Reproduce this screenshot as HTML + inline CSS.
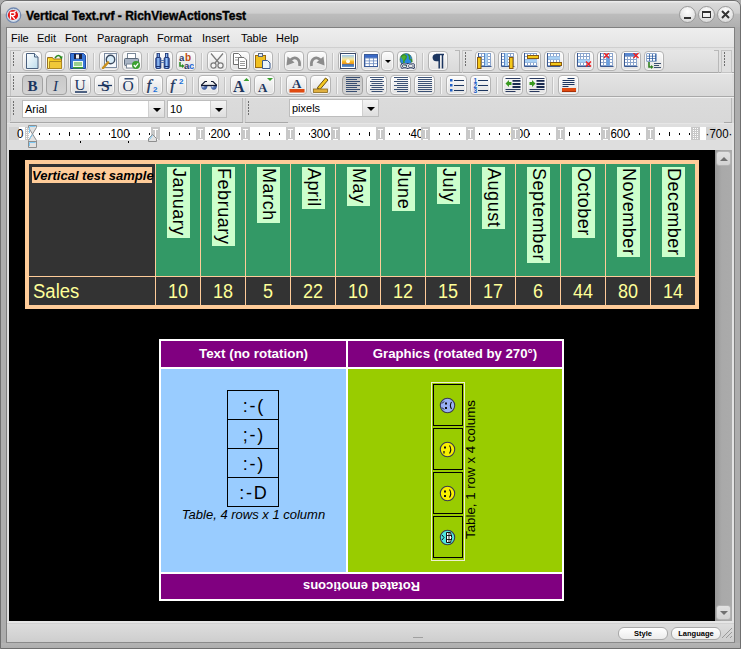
<!DOCTYPE html>
<html><head><meta charset="utf-8">
<style>
*{box-sizing:border-box}
html,body{margin:0;padding:0}
body{width:741px;height:649px;position:relative;overflow:hidden;background:#acacac;font-family:"Liberation Sans",sans-serif}
.a{position:absolute}
.btn{position:absolute;width:20px;height:20px;border:1px solid #b4b4b4;border-radius:4px;background:linear-gradient(#fdfdfd,#ebebeb 60%,#e2e2e2);box-shadow:inset 0 0 0 1px rgba(255,255,255,.6)}
.r2{top:75px;width:21px}
.r1{top:51px}
.on{background:linear-gradient(#c9c9c9,#d3d3d3);border-color:#a2a2a2;box-shadow:none}
.btn svg{position:absolute;left:1px;top:1px}
.r2 svg{left:1.5px}
.sep{position:absolute;width:2px;height:17px;border-left:1px solid #c4c4c4;border-right:1px solid #f4f4f4}
.menu{position:absolute;top:32px;font-size:11px;color:#000}
.grip{position:absolute;width:1px;height:14px;background:repeating-linear-gradient(#6e6e6e 0 1.6px,transparent 1.6px 3px)}
.combo{position:absolute;background:#fff;border:1px solid #bdbdbd;height:18px;font-size:11px;line-height:17px;padding-left:2px}
.dd{position:absolute;top:0;right:0;width:16px;height:16px;background:linear-gradient(#f4f4f4,#dedede);border-left:1px solid #d0d0d0}
.dd:after{content:"";position:absolute;left:4px;top:7px;border-left:4px solid transparent;border-right:4px solid transparent;border-top:4px solid #000}
.mk{position:absolute;top:127px;width:9px;height:13px;background:#c8c8c8}
.mk:before{content:"";position:absolute;left:2px;top:2px;width:5px;height:9px;border-top:1px solid #fff;border-bottom:1px solid #fff}
.mk:after{content:"";position:absolute;left:4px;top:2px;width:1px;height:9px;background:#fff}
.dot{position:absolute;top:133px;width:1px;height:2px;background:#000}
.rn{position:absolute;top:128px;font-size:11.5px;line-height:13px;color:#000;transform:scaleY(1.12)}
/* table1 */
.mcell{position:absolute;top:164px;width:44px;height:112px;background:#339966}
.mlab{position:absolute;left:11px;top:3px;width:23px;background:#ccffcc;writing-mode:vertical-rl;font-size:18px;line-height:23px;white-space:nowrap;color:#000;padding:1px 0 2px;letter-spacing:.55px}
.scell{position:absolute;top:277px;width:44px;height:28px;background:#333;color:#ffff99;font-size:18px;line-height:28px;text-align:center}
.scell span,.sl span{display:inline-block;transform:translateY(0.5px) scaleY(1.08)}
.emo{position:absolute;left:229px;width:48px;height:28px;font-size:18px;line-height:30px;text-align:center;color:#000;letter-spacing:1.8px;text-indent:1.8px}
.ic{position:absolute;left:433px;width:30px;height:42px;border:1px solid #000}
</style></head><body>

<!-- window frame -->
<div class="a" style="left:0;top:0;width:741px;height:649px;border:1px solid #6f6f6f;border-radius:7px 7px 0 0;background:#adadad"></div>
<div class="a" style="left:1px;top:1px;width:739px;height:26px;border-radius:6px 6px 0 0;background:linear-gradient(#ececec 0,#ececec 1px,#dadada 2px,#cecece 12px,#bcbcbc 13.5px,#b0b0b0 26px)"></div>
<div class="a" style="left:6px;top:27px;width:729px;height:616px;background:#808080"></div>
<div class="a" style="left:6px;top:642px;width:729px;height:1px;background:#8a8a8a"></div><div class="a" style="left:1px;top:643px;width:739px;height:5px;background:linear-gradient(#b4b4b4,#aeaeae)"></div>

<!-- app icon -->
<svg class="a" style="left:5px;top:7px" width="17" height="17"><circle cx="8.5" cy="8.2" r="7.2" fill="#f0f4f8" stroke="#7088b0" stroke-width="1.3"/><circle cx="8.5" cy="8.2" r="5.9" fill="none" stroke="#b8c8dc" stroke-width=".8"/><circle cx="8" cy="8" r="5.1" fill="#e41010"/><path d="M5.5 12V5.5h2.5q2 0 2 1.6t-2 1.6h-1.2l3 3.3" fill="none" stroke="#fff" stroke-width="1.3"/><path d="M8.5 5l2.5-.5" stroke="#fff"/></svg>
<!-- title -->
<div class="a" style="left:26px;top:9px;font-size:12px;font-weight:bold;color:#000;line-height:15px;white-space:nowrap;-webkit-text-stroke:.35px #000">Vertical Text.rvf - RichViewActionsTest</div>
<!-- caption buttons -->
<div class="a" style="left:679px;top:6px;width:17px;height:17px;border-radius:50%;border:1px solid #9a9a9a;background:radial-gradient(circle at 50% 30%,#ffffff,#e4e4e4 60%,#cfcfcf)"></div>
<div class="a" style="left:684px;top:17px;width:7px;height:2px;background:#333"></div>
<div class="a" style="left:698px;top:6px;width:17px;height:17px;border-radius:50%;border:1px solid #9a9a9a;background:radial-gradient(circle at 50% 30%,#ffffff,#e4e4e4 60%,#cfcfcf)"></div>
<div class="a" style="left:702px;top:11px;width:9px;height:7px;border:1px solid #333;border-top-width:2px"></div>
<div class="a" style="left:717px;top:6px;width:17px;height:17px;border-radius:50%;border:1px solid #9a9a9a;background:radial-gradient(circle at 50% 30%,#ffffff,#e4e4e4 60%,#cfcfcf)"></div>
<svg class="a" style="left:721px;top:10px" width="9" height="9"><path d="M1 1L8 8M8 1L1 8" stroke="#333" stroke-width="2"/></svg>

<!-- client -->
<div class="a" style="left:7px;top:28px;width:727px;height:614px;background:#dcdcdc"></div>
<!-- menu -->
<div class="a" style="left:7px;top:28px;width:727px;height:19px;background:linear-gradient(#eeeeee,#e4e4e4)"></div>
<div class="a" style="left:7px;top:47px;width:727px;height:1px;background:#cfcfcf"></div>
<div class="menu" style="left:11px">File</div>
<div class="menu" style="left:37px">Edit</div>
<div class="menu" style="left:65px">Font</div>
<div class="menu" style="left:97px">Paragraph</div>
<div class="menu" style="left:157px">Format</div>
<div class="menu" style="left:202px">Insert</div>
<div class="menu" style="left:241px">Table</div>
<div class="menu" style="left:276px">Help</div>

<!-- toolbar rows background -->
<div class="a" style="left:7px;top:48px;width:727px;height:75px;background:linear-gradient(#e2e2e2,#d8d8d8)"></div>
<div class="a" style="left:10px;top:50px;width:709px;height:23px;background:linear-gradient(#e6e6e6,#d9d9d9)"></div>
<div class="a" style="left:7px;top:72px;width:727px;height:1px;background:#a9a9a9"></div>
<div class="a" style="left:7px;top:73px;width:727px;height:1px;background:#f0f0f0"></div>
<div class="a" style="left:10px;top:74px;width:722px;height:23px;background:linear-gradient(#e4e4e4,#d8d8d8)"></div>
<div class="a" style="left:7px;top:96px;width:727px;height:1px;background:#a9a9a9"></div>
<div class="a" style="left:7px;top:97px;width:727px;height:1px;background:#f0f0f0"></div>
<div class="a" style="left:7px;top:123px;width:727px;height:1px;background:#e6e6e6"></div>
<div class="a" style="left:10px;top:50px;width:1px;height:22px;background:#c2c2c2"></div><div class="a" style="left:10px;top:50px;width:11px;height:1px;background:#c2c2c2"></div><div class="a" style="left:10px;top:74px;width:1px;height:22px;background:#c2c2c2"></div><div class="a" style="left:10px;top:98px;width:1px;height:23px;background:#c2c2c2"></div><div class="a" style="left:10px;top:122px;width:233px;height:1px;background:#a8a8a8"></div><div class="a" style="left:245px;top:122px;width:43px;height:1px;background:#a8a8a8"></div><div class="a" style="left:724px;top:122px;width:8px;height:1px;background:#a8a8a8"></div><div class="a" style="left:731px;top:98px;width:1px;height:24px;background:#b8b8b8"></div><div class="grip" style="left:13px;top:52px"></div>
<div class="grip" style="left:13px;top:76px"></div>
<div class="grip" style="left:13px;top:101px"></div>
<div class="grip" style="left:465px;top:52px"></div><div class="a" style="left:462px;top:50px;width:10px;height:1px;background:#c2c2c2"></div>
<div class="grip" style="left:724px;top:52px"></div>
<div class="grip" style="left:248px;top:101px"></div>
<div class="a" style="left:459px;top:50px;width:1px;height:22px;background:#b8b8b8"></div><div class="a" style="left:455px;top:50px;width:4px;height:1px;background:#b8b8b8"></div><div class="a" style="left:714px;top:50px;width:4px;height:1px;background:#b8b8b8"></div>
<div class="a" style="left:462px;top:50px;width:1px;height:23px;background:#c8c8c8"></div>
<div class="a" style="left:718px;top:50px;width:1px;height:23px;background:#b8b8b8"></div>
<div class="a" style="left:721px;top:50px;width:11px;height:23px;border:1px solid #c4c4c4"></div>
<div class="a" style="left:242px;top:98px;width:1px;height:24px;background:#b8b8b8"></div>
<div class="a" style="left:245px;top:98px;width:1px;height:24px;background:#c8c8c8"></div>

<!-- ROW1 -->
<div class="btn r1" style="left:22px"><svg width="16" height="16" viewBox="0 0 16 16"><defs><linearGradient id="gn" x1="0" y1="0" x2="1" y2="1"><stop offset="0" stop-color="#ffffff"/><stop offset="1" stop-color="#bcdcec"/></linearGradient></defs><path d="M2.5 0.5h8l3.5 3.5v11.5h-11.5z" fill="url(#gn)" stroke="#4a607e"/><path d="M10.5 0.5v3.5h3.5" fill="#d8ecf8" stroke="#4a607e"/></svg></div>
<div class="btn r1" style="left:45px"><svg width="16" height="16" viewBox="0 0 16 16"><path d="M0.5 4.5h5l1 1.5h8v9.5h-14z" fill="#f6cc20" stroke="#9a7020"/><path d="M2.5 8.5h12v7h-12z" fill="#f0c838" stroke="#b08a20"/><path d="M1.5 6v9" stroke="#fff070"/><path d="M8 5q3.5-5 6.5 0" fill="none" stroke="#2a8a20" stroke-width="1.6"/><path d="M12.5 4.5l3 -1.5-0.5 3.5z" fill="#2a8a20"/></svg></div>
<div class="btn r1" style="left:68px"><svg width="16" height="16" viewBox="0 0 16 16"><path d="M0.5 0.5h13l2 2v13h-15z" fill="#3a78d8" stroke="#2048a0"/><rect x="4" y="1" width="8" height="5" fill="#1a2040"/><rect x="6" y="1.5" width="3" height="4" fill="#f0f0f0"/><rect x="3" y="8" width="10" height="7" fill="#f4fff0"/><path d="M4 10h8M4 12h8" stroke="#40a030" stroke-width="1.2"/><rect x="3" y="14" width="10" height="1.5" fill="#40a030"/></svg></div>
<div class="sep" style="left:93px;top:53px"></div>
<div class="btn r1" style="left:99px"><svg width="16" height="16" viewBox="0 0 16 16"><rect x="3.5" y="0.5" width="12" height="14" fill="#f4f8fc" stroke="#7a8aa0"/><circle cx="9.5" cy="6.5" r="4.2" fill="#d8ecf8" stroke="#3a4a60" stroke-width="1.4"/><path d="M7 9.5l-5 5.5" stroke="#c89020" stroke-width="2.6" stroke-linecap="round"/></svg></div>
<div class="btn r1" style="left:122px"><svg width="16" height="16" viewBox="0 0 16 16"><rect x="3.5" y="0.5" width="8" height="5" fill="#fff" stroke="#7a8898"/><rect x="0.5" y="5.5" width="14" height="7" rx="1" fill="#a8b4c4" stroke="#5a6878"/><rect x="2.5" y="11" width="9" height="4" fill="#fff" stroke="#7a8898"/><circle cx="12" cy="12" r="4" fill="#3aa030"/><path d="M9.8 12l1.6 1.8 2.8-3.4" stroke="#fff" stroke-width="1.3" fill="none"/></svg></div>
<div class="sep" style="left:147px;top:53px"></div>
<div class="btn r1" style="left:153px"><svg width="16" height="16" viewBox="0 0 16 16"><defs><linearGradient id="gb" x1="0" x2="1"><stop offset="0" stop-color="#1a3a90"/><stop offset=".45" stop-color="#9ccaff"/><stop offset="1" stop-color="#1a3a90"/></linearGradient></defs><rect x="2" y="0.5" width="2.5" height="4" fill="url(#gb)" stroke="#183070" stroke-width=".8"/><rect x="10.5" y="0.5" width="2.5" height="4" fill="url(#gb)" stroke="#183070" stroke-width=".8"/><rect x="0.8" y="4.5" width="5" height="11" rx="1" fill="url(#gb)" stroke="#183070" stroke-width=".9"/><rect x="9.2" y="4.5" width="5" height="11" rx="1" fill="url(#gb)" stroke="#183070" stroke-width=".9"/><path d="M5.8 7.5h3.4M5.8 9.5h3.4" stroke="#5a7ab0"/><path d="M1 13.5h4.6M9.4 13.5h4.6" stroke="#183070" stroke-width="1.2"/></svg></div>
<div class="btn r1" style="left:176px"><svg width="16" height="16" viewBox="0 0 16 16"><text x="1" y="8" font-size="9.5" font-weight="bold" font-family="Liberation Sans" fill="#2a3a6a">a</text><text x="7" y="8" font-size="10" font-weight="bold" font-family="Liberation Sans" fill="#c04a10">b</text><text x="6" y="15.5" font-size="9.5" font-weight="bold" font-family="Liberation Sans" fill="#2a3a6a">a</text><text x="11" y="15.5" font-size="9.5" font-weight="bold" font-family="Liberation Sans" fill="#2a68d8">c</text><path d="M2 9v4h3" stroke="#2a8a20" stroke-width="1.5" fill="none"/><path d="M4 11l2.5 2-2.5 2z" fill="#2a8a20"/></svg></div>
<div class="sep" style="left:201px;top:53px"></div>
<div class="btn r1" style="left:207px"><svg width="16" height="16" viewBox="0 0 16 16"><path d="M2 0.5l8 9.5M14 0.5l-8 9.5" stroke="#7a7a7a" stroke-width="1.2"/><circle cx="4.5" cy="12.5" r="2.6" fill="#f4f4f4" stroke="#7a7a7a" stroke-width="1.2"/><circle cx="11.5" cy="12.5" r="2.6" fill="#f4f4f4" stroke="#7a7a7a" stroke-width="1.2"/></svg></div>
<div class="btn r1" style="left:230px"><svg width="16" height="16" viewBox="0 0 16 16"><path d="M1.5 0.5h5l2.5 2.5v8.5h-7.5z" fill="#fff" stroke="#707070"/><path d="M3 4.5h4M3 7h4" stroke="#9a9a9a"/><path d="M6.5 4.5h5.5l2.5 2.5v8.5h-8z" fill="#fff" stroke="#707070"/><path d="M8 8.5h5M8 10.5h5M8 12.5h5" stroke="#9a9a9a"/></svg></div>
<div class="btn r1" style="left:253px"><svg width="16" height="16" viewBox="0 0 16 16"><rect x="0.5" y="2.5" width="10" height="12" fill="#f0c020" stroke="#9a6a10"/><rect x="3.5" y="0.5" width="4" height="3" fill="#e0e8f0" stroke="#5a6a80"/><path d="M7.5 7.5h5l2.5 2.5v5.5h-7.5z" fill="#eaf4fc" stroke="#3a5a90"/></svg></div>
<div class="sep" style="left:278px;top:53px"></div>
<div class="btn r1" style="left:284px"><svg width="16" height="16" viewBox="0 0 16 16"><path d="M13.5 13C14.5 6 9 2.5 4.5 7" fill="none" stroke="#8c8c8c" stroke-width="2.8"/><path d="M0.5 12.5L1.5 3.5L8.5 9.5Z" fill="#8c8c8c"/></svg></div>
<div class="btn r1" style="left:307px"><svg width="16" height="16" viewBox="0 0 16 16"><g transform="matrix(-1 0 0 1 16 0)"><path d="M13.5 13C14.5 6 9 2.5 4.5 7" fill="none" stroke="#8c8c8c" stroke-width="2.8"/><path d="M0.5 12.5L1.5 3.5L8.5 9.5Z" fill="#8c8c8c"/></g></svg></div>
<div class="sep" style="left:332px;top:53px"></div>
<div class="btn r1" style="left:338px"><svg width="16" height="16" viewBox="0 0 16 16"><defs><linearGradient id="gi" x1="0" y1="0" x2="0" y2="1"><stop offset="0" stop-color="#9cc8f0"/><stop offset=".35" stop-color="#f8e8a0"/><stop offset=".55" stop-color="#f8b820"/><stop offset=".75" stop-color="#e89020"/><stop offset=".8" stop-color="#3a6ab0"/><stop offset="1" stop-color="#6a9ad0"/></linearGradient></defs><rect x="0.5" y="0.5" width="15" height="15" fill="#fff" stroke="#3a4a6a"/><rect x="2" y="2" width="12" height="12" fill="url(#gi)"/><circle cx="8" cy="8.2" r="2" fill="#fffef0"/></svg></div>
<div class="btn r1" style="left:361px;width:19px"><svg width="16" height="16" viewBox="0 0 16 16"><rect x="1.5" y="1.5" width="13" height="12" fill="#6a8ac0"/><rect x="1.5" y="1.5" width="13" height="3" fill="#3a6ac8"/><rect x="2.5" y="5.5" width="3.4" height="2" fill="#fff"/><rect x="2.5" y="8.3" width="3.4" height="2" fill="#fff"/><rect x="2.5" y="11.1" width="3.4" height="2" fill="#fff"/><rect x="6.7" y="5.5" width="3.4" height="2" fill="#fff"/><rect x="6.7" y="8.3" width="3.4" height="2" fill="#fff"/><rect x="6.7" y="11.1" width="3.4" height="2" fill="#fff"/><rect x="10.9" y="5.5" width="3.4" height="2" fill="#fff"/><rect x="10.9" y="8.3" width="3.4" height="2" fill="#fff"/><rect x="10.9" y="11.1" width="3.4" height="2" fill="#fff"/><rect x="1.5" y="1.5" width="13" height="12" fill="none" stroke="#3a5a98"/></svg></div>
<div class="btn r1" style="left:381px;width:13px"><div class="a" style="left:3px;top:8px;border-left:3px solid transparent;border-right:3px solid transparent;border-top:3px solid #000;width:0;height:0"></div></div>
<div class="btn r1" style="left:397px"><svg width="16" height="16" viewBox="0 0 16 16"><circle cx="7" cy="6.5" r="6" fill="#2a88e0"/><path d="M2 4q2-3 4-2t1 3-2 3 1 3M9 1.5q2 1 1.5 3t2 2.5l0.5 2" fill="#50b030" stroke="#3a9a20" stroke-width="1.3"/><circle cx="7" cy="6.5" r="6" fill="none" stroke="#2a6a40" stroke-width=".6"/><rect x="2.5" y="11" width="6.5" height="4.2" rx="2.1" fill="none" stroke="#1a2a50" stroke-width="2.2"/><rect x="8.5" y="11" width="6.5" height="4.2" rx="2.1" fill="none" stroke="#1a2a50" stroke-width="2.2"/><rect x="2.5" y="11" width="6.5" height="4.2" rx="2.1" fill="none" stroke="#fff" stroke-width=".9"/><rect x="8.5" y="11" width="6.5" height="4.2" rx="2.1" fill="none" stroke="#fff" stroke-width=".9"/></svg></div>
<div class="sep" style="left:422px;top:53px"></div>
<div class="btn r1" style="left:428px"><svg width="16" height="16" viewBox="0 0 16 16"><path d="M6 1.5h8M9.2 1.5v14M12.5 1.5v14" stroke="#1c3660" stroke-width="1.5"/><path d="M9.5 1h-3.3a3.6 3.6 0 0 0 0 7.2h3.3z" fill="#1c3660"/></svg></div>
<div class="btn r1" style="left:475px"><svg width="16" height="16" viewBox="0 0 16 16"><rect x="1" y="0" width="13" height="13" fill="#8aa4cc"/><rect x="2" y="1" width="2" height="2" fill="#fff"/><rect x="2" y="4" width="2" height="2" fill="#fff"/><rect x="2" y="7" width="2" height="2" fill="#fff"/><rect x="2" y="10" width="2" height="2" fill="#fff"/><rect x="5" y="1" width="2" height="2" fill="#fff"/><rect x="5" y="4" width="2" height="2" fill="#fff"/><rect x="5" y="7" width="2" height="2" fill="#fff"/><rect x="5" y="10" width="2" height="2" fill="#fff"/><rect x="8" y="1" width="2" height="2" fill="#fff"/><rect x="8" y="4" width="2" height="2" fill="#fff"/><rect x="8" y="7" width="2" height="2" fill="#fff"/><rect x="8" y="10" width="2" height="2" fill="#fff"/><rect x="11" y="1" width="2" height="2" fill="#fff"/><rect x="11" y="4" width="2" height="2" fill="#fff"/><rect x="11" y="7" width="2" height="2" fill="#fff"/><rect x="11" y="10" width="2" height="2" fill="#fff"/><rect x="7.5" y="0" width="3" height="13" fill="#a8d0f4"/><path d="M7.5 0v13" stroke="#5a88c8"/><path d="M1.5 0v13.5h13" fill="none" stroke="#3a5890"/><rect x="0.5" y="4.5" width="3.5" height="11" fill="#f4c818" stroke="#8a5a10"/></svg></div>
<div class="btn r1" style="left:498px"><svg width="16" height="16" viewBox="0 0 16 16"><rect x="1" y="0" width="13" height="13" fill="#8aa4cc"/><rect x="2" y="1" width="2" height="2" fill="#fff"/><rect x="2" y="4" width="2" height="2" fill="#fff"/><rect x="2" y="7" width="2" height="2" fill="#fff"/><rect x="2" y="10" width="2" height="2" fill="#fff"/><rect x="5" y="1" width="2" height="2" fill="#fff"/><rect x="5" y="4" width="2" height="2" fill="#fff"/><rect x="5" y="7" width="2" height="2" fill="#fff"/><rect x="5" y="10" width="2" height="2" fill="#fff"/><rect x="8" y="1" width="2" height="2" fill="#fff"/><rect x="8" y="4" width="2" height="2" fill="#fff"/><rect x="8" y="7" width="2" height="2" fill="#fff"/><rect x="8" y="10" width="2" height="2" fill="#fff"/><rect x="11" y="1" width="2" height="2" fill="#fff"/><rect x="11" y="4" width="2" height="2" fill="#fff"/><rect x="11" y="7" width="2" height="2" fill="#fff"/><rect x="11" y="10" width="2" height="2" fill="#fff"/><rect x="4.5" y="0" width="3" height="13" fill="#a8d0f4"/><path d="M4.5 0v13" stroke="#5a88c8"/><path d="M1.5 0v13.5h13" fill="none" stroke="#3a5890"/><rect x="9.5" y="4.5" width="3.5" height="11" fill="#f4c818" stroke="#8a5a10"/></svg></div>
<div class="btn r1" style="left:521px"><svg width="16" height="16" viewBox="0 0 16 16"><rect x="1" y="0" width="13" height="13" fill="#8aa4cc"/><rect x="2" y="1" width="2" height="2" fill="#fff"/><rect x="2" y="4" width="2" height="2" fill="#fff"/><rect x="2" y="7" width="2" height="2" fill="#fff"/><rect x="2" y="10" width="2" height="2" fill="#fff"/><rect x="5" y="1" width="2" height="2" fill="#fff"/><rect x="5" y="4" width="2" height="2" fill="#fff"/><rect x="5" y="7" width="2" height="2" fill="#fff"/><rect x="5" y="10" width="2" height="2" fill="#fff"/><rect x="8" y="1" width="2" height="2" fill="#fff"/><rect x="8" y="4" width="2" height="2" fill="#fff"/><rect x="8" y="7" width="2" height="2" fill="#fff"/><rect x="8" y="10" width="2" height="2" fill="#fff"/><rect x="11" y="1" width="2" height="2" fill="#fff"/><rect x="11" y="4" width="2" height="2" fill="#fff"/><rect x="11" y="7" width="2" height="2" fill="#fff"/><rect x="11" y="10" width="2" height="2" fill="#fff"/><rect x="1" y="6.5" width="13" height="3" fill="#a8d0f4"/><path d="M1.5 0v13.5h13" fill="none" stroke="#3a5890"/><rect x="4.5" y="2.5" width="11" height="3" fill="#f4c818" stroke="#8a5a10"/></svg></div>
<div class="btn r1" style="left:544px"><svg width="16" height="16" viewBox="0 0 16 16"><rect x="1" y="0" width="13" height="13" fill="#8aa4cc"/><rect x="2" y="1" width="2" height="2" fill="#fff"/><rect x="2" y="4" width="2" height="2" fill="#fff"/><rect x="2" y="7" width="2" height="2" fill="#fff"/><rect x="2" y="10" width="2" height="2" fill="#fff"/><rect x="5" y="1" width="2" height="2" fill="#fff"/><rect x="5" y="4" width="2" height="2" fill="#fff"/><rect x="5" y="7" width="2" height="2" fill="#fff"/><rect x="5" y="10" width="2" height="2" fill="#fff"/><rect x="8" y="1" width="2" height="2" fill="#fff"/><rect x="8" y="4" width="2" height="2" fill="#fff"/><rect x="8" y="7" width="2" height="2" fill="#fff"/><rect x="8" y="10" width="2" height="2" fill="#fff"/><rect x="11" y="1" width="2" height="2" fill="#fff"/><rect x="11" y="4" width="2" height="2" fill="#fff"/><rect x="11" y="7" width="2" height="2" fill="#fff"/><rect x="11" y="10" width="2" height="2" fill="#fff"/><rect x="1" y="3.5" width="13" height="3" fill="#a8d0f4"/><path d="M1.5 0v13.5h13" fill="none" stroke="#3a5890"/><rect x="4.5" y="9.5" width="11" height="3" fill="#f4c818" stroke="#8a5a10"/></svg></div>
<div class="sep" style="left:568px;top:53px"></div>
<div class="btn r1" style="left:574px"><svg width="16" height="16" viewBox="0 0 16 16"><rect x="1" y="0" width="13" height="13" fill="#8aa4cc"/><rect x="2" y="1" width="2" height="2" fill="#fff"/><rect x="2" y="4" width="2" height="2" fill="#fff"/><rect x="2" y="7" width="2" height="2" fill="#fff"/><rect x="2" y="10" width="2" height="2" fill="#fff"/><rect x="5" y="1" width="2" height="2" fill="#fff"/><rect x="5" y="4" width="2" height="2" fill="#fff"/><rect x="5" y="7" width="2" height="2" fill="#fff"/><rect x="5" y="10" width="2" height="2" fill="#fff"/><rect x="8" y="1" width="2" height="2" fill="#fff"/><rect x="8" y="4" width="2" height="2" fill="#fff"/><rect x="8" y="7" width="2" height="2" fill="#fff"/><rect x="8" y="10" width="2" height="2" fill="#fff"/><rect x="11" y="1" width="2" height="2" fill="#fff"/><rect x="11" y="4" width="2" height="2" fill="#fff"/><rect x="11" y="7" width="2" height="2" fill="#fff"/><rect x="11" y="10" width="2" height="2" fill="#fff"/><rect x="1" y="6.5" width="13" height="3" fill="#a8d4f8"/><path d="M1.5 0v13.5h13" fill="none" stroke="#3a5890"/><path d="M10 8.5l5 5M15 8.5l-5 5" stroke="#f02020" stroke-width="1.4"/></svg></div>
<div class="btn r1" style="left:597px"><svg width="16" height="16" viewBox="0 0 16 16"><rect x="1" y="0" width="13" height="13" fill="#8aa4cc"/><rect x="2" y="1" width="2" height="2" fill="#fff"/><rect x="2" y="4" width="2" height="2" fill="#fff"/><rect x="2" y="7" width="2" height="2" fill="#fff"/><rect x="2" y="10" width="2" height="2" fill="#fff"/><rect x="5" y="1" width="2" height="2" fill="#fff"/><rect x="5" y="4" width="2" height="2" fill="#fff"/><rect x="5" y="7" width="2" height="2" fill="#fff"/><rect x="5" y="10" width="2" height="2" fill="#fff"/><rect x="8" y="1" width="2" height="2" fill="#fff"/><rect x="8" y="4" width="2" height="2" fill="#fff"/><rect x="8" y="7" width="2" height="2" fill="#fff"/><rect x="8" y="10" width="2" height="2" fill="#fff"/><rect x="11" y="1" width="2" height="2" fill="#fff"/><rect x="11" y="4" width="2" height="2" fill="#fff"/><rect x="11" y="7" width="2" height="2" fill="#fff"/><rect x="11" y="10" width="2" height="2" fill="#fff"/><rect x="7.5" y="3" width="3" height="10.5" fill="#6aa0e0"/><path d="M1.5 0v13.5h13" fill="none" stroke="#3a5890"/><path d="M5 0l5 5M10 0l-5 5" stroke="#f02020" stroke-width="1.4"/></svg></div>
<div class="btn r1" style="left:621px"><svg width="16" height="16" viewBox="0 0 16 16"><rect x="1" y="0" width="13" height="13" fill="#8aa4cc"/><rect x="2" y="1" width="2" height="2" fill="#fff"/><rect x="2" y="4" width="2" height="2" fill="#fff"/><rect x="2" y="7" width="2" height="2" fill="#fff"/><rect x="2" y="10" width="2" height="2" fill="#fff"/><rect x="5" y="1" width="2" height="2" fill="#fff"/><rect x="5" y="4" width="2" height="2" fill="#fff"/><rect x="5" y="7" width="2" height="2" fill="#fff"/><rect x="5" y="10" width="2" height="2" fill="#fff"/><rect x="8" y="1" width="2" height="2" fill="#fff"/><rect x="8" y="4" width="2" height="2" fill="#fff"/><rect x="8" y="7" width="2" height="2" fill="#fff"/><rect x="8" y="10" width="2" height="2" fill="#fff"/><rect x="11" y="1" width="2" height="2" fill="#fff"/><rect x="11" y="4" width="2" height="2" fill="#fff"/><rect x="11" y="7" width="2" height="2" fill="#fff"/><rect x="11" y="10" width="2" height="2" fill="#fff"/><rect x="1" y="0" width="13" height="3" fill="#5a88d0"/><path d="M1.5 0v13.5h13" fill="none" stroke="#3a5890"/><path d="M10.5 0l5 5M15.5 0l-5 5" stroke="#f02020" stroke-width="1.4"/></svg></div>
<div class="btn r1" style="left:644px"><svg width="16" height="16" viewBox="0 0 16 16"><rect x="0.5" y="0.5" width="10" height="8" fill="#2a5aa0"/><rect x="1" y="1.0" width="2.2" height="1.8" fill="#fff"/><rect x="1" y="3.5" width="2.2" height="1.8" fill="#fff"/><rect x="1" y="6.0" width="2.2" height="1.8" fill="#fff"/><rect x="4" y="1.0" width="2.2" height="1.8" fill="#fff"/><rect x="4" y="3.5" width="2.2" height="1.8" fill="#fff"/><rect x="4" y="6.0" width="2.2" height="1.8" fill="#fff"/><rect x="7" y="1.0" width="2.2" height="1.8" fill="#fff"/><rect x="7" y="3.5" width="2.2" height="1.8" fill="#fff"/><rect x="7" y="6.0" width="2.2" height="1.8" fill="#fff"/><path d="M3 9v5h3" fill="none" stroke="#308020" stroke-width="1.6"/><path d="M5 12l2.5 2-2.5 2z" fill="#308020"/><path d="M8 10.5h7M8 12.5h5M8 14.5h7" stroke="#3a5070"/></svg></div>
<!-- ROW2 -->
<div class="btn r2 on" style="left:22px"><svg width="16" height="16" viewBox="0 0 16 16"><text x="2.5" y="13.5" font-size="15" font-family="Liberation Serif" font-weight="bold" font-style="normal" fill="#1c3660">B</text></svg></div>
<div class="btn r2 on" style="left:46px"><svg width="16" height="16" viewBox="0 0 16 16"><text x="4" y="13.5" font-size="15" font-family="Liberation Serif" font-weight="normal" font-style="italic" fill="#1c3660">I</text></svg></div>
<div class="btn r2" style="left:70px"><svg width="16" height="16" viewBox="0 0 16 16"><text x="1.5" y="12.5" font-size="15.5" font-family="Liberation Serif" font-weight="normal" font-style="normal" fill="#1c3660">U</text><path d="M2 15h12" stroke="#1c3660" stroke-width="1.5"/></svg></div>
<div class="btn r2" style="left:94px"><svg width="16" height="16" viewBox="0 0 16 16"><text x="4" y="13.5" font-size="15.5" font-family="Liberation Serif" font-weight="bold" font-style="normal" fill="#1c3660">S</text><path d="M1 8.5h14" stroke="#1c3660" stroke-width="1.3"/></svg></div>
<div class="btn r2" style="left:118px"><svg width="16" height="16" viewBox="0 0 16 16"><text x="1.5" y="14" font-size="15.5" font-family="Liberation Serif" font-weight="normal" font-style="normal" fill="#1c3660">O</text><path d="M3.5 1.8h9" stroke="#1c3660" stroke-width="1.3"/></svg></div>
<div class="btn r2" style="left:142px"><svg width="16" height="16" viewBox="0 0 16 16"><text x="1.5" y="13.5" font-size="17" font-family="Liberation Serif" font-style="italic" fill="#1c3660" stroke="#1c3660" stroke-width=".3">f</text><text x="8" y="15" font-size="8" font-family="Liberation Sans" font-weight="bold" fill="#1a70d8">2</text></svg></div>
<div class="btn r2" style="left:166px"><svg width="16" height="16" viewBox="0 0 16 16"><text x="1" y="14" font-size="17" font-family="Liberation Serif" font-style="italic" fill="#1c3660" stroke="#1c3660" stroke-width=".3">f</text><text x="10" y="6.5" font-size="8" font-family="Liberation Sans" font-weight="bold" fill="#1a70d8">2</text></svg></div>
<div class="sep" style="left:192px;top:77px"></div>
<div class="btn r2" style="left:198px"><svg width="16" height="16" viewBox="0 0 16 16"><defs><radialGradient id="gg" cx=".3" cy=".3" r=".8"><stop offset="0" stop-color="#e8f0ff"/><stop offset=".35" stop-color="#5a78b8"/><stop offset="1" stop-color="#2a4a90"/></radialGradient></defs><path d="M0 8.5L4 4.5h2M16 8.5L12 4.5h-2" fill="none" stroke="#101830" stroke-width="1.2"/><path d="M0 8h6.5q0 4.8-3.2 4.8t-3.3-4.8z" fill="url(#gg)"/><path d="M9.5 8h6.5q0 4.8-3.2 4.8t-3.3-4.8z" fill="url(#gg)"/><path d="M0 8.5h16" stroke="#101830" stroke-width="1.3"/></svg></div>
<div class="sep" style="left:224px;top:77px"></div>
<div class="btn r2" style="left:230px"><svg width="16" height="16" viewBox="0 0 16 16"><text x="0" y="14.5" font-size="16" font-family="Liberation Serif" font-weight="bold" fill="#1c3660">A</text><path d="M10.5 4l3-3 3 3z" fill="#3aa030"/></svg></div>
<div class="btn r2" style="left:254px"><svg width="16" height="16" viewBox="0 0 16 16"><text x="1" y="14.5" font-size="13" font-family="Liberation Serif" font-weight="bold" fill="#1c3660">A</text><path d="M10 1h6l-3 3z" fill="#3aa030"/></svg></div>
<div class="sep" style="left:280px;top:77px"></div>
<div class="btn r2" style="left:286px"><svg width="16" height="16" viewBox="0 0 16 16"><text x="3" y="11" font-size="13" font-family="Liberation Serif" font-weight="bold" fill="#1c3660">A</text><rect x="0.5" y="12" width="15" height="3.5" fill="#e04a10"/></svg></div>
<div class="btn r2" style="left:310px"><svg width="16" height="16" viewBox="0 0 16 16"><path d="M4.5 10.5l8-9.5 2.5 2-8 9.5z" fill="#f4c820" stroke="#6a5010"/><path d="M4.5 10.5l-1 2 2.5-0.5" fill="#6a5010"/><rect x="0.5" y="12" width="14" height="3.5" fill="#e0b040" stroke="#8a6a20" stroke-width=".8"/></svg></div>
<div class="sep" style="left:336px;top:77px"></div>
<div class="btn r2 on" style="left:342px"><svg width="16" height="16" viewBox="0 0 16 16"><path d="M1 0.5h14" stroke="#1c3660" stroke-opacity=".85"/><path d="M1 2.5h11" stroke="#1c3660" stroke-opacity=".85"/><path d="M1 4.5h14" stroke="#1c3660" stroke-opacity=".85"/><path d="M1 6.5h11" stroke="#1c3660" stroke-opacity=".85"/><path d="M1 8.5h14" stroke="#1c3660" stroke-opacity=".85"/><path d="M1 10.5h11" stroke="#1c3660" stroke-opacity=".85"/><path d="M1 12.5h14" stroke="#1c3660" stroke-opacity=".85"/><path d="M1 14.5h11" stroke="#1c3660" stroke-opacity=".85"/></svg></div>
<div class="btn r2" style="left:366px"><svg width="16" height="16" viewBox="0 0 16 16"><path d="M1 0.5h14" stroke="#1c3660" stroke-opacity=".85"/><path d="M2.5 2.5h11" stroke="#1c3660" stroke-opacity=".85"/><path d="M1 4.5h14" stroke="#1c3660" stroke-opacity=".85"/><path d="M2.5 6.5h11" stroke="#1c3660" stroke-opacity=".85"/><path d="M1 8.5h14" stroke="#1c3660" stroke-opacity=".85"/><path d="M2.5 10.5h11" stroke="#1c3660" stroke-opacity=".85"/><path d="M1 12.5h14" stroke="#1c3660" stroke-opacity=".85"/><path d="M2.5 14.5h11" stroke="#1c3660" stroke-opacity=".85"/></svg></div>
<div class="btn r2" style="left:390px"><svg width="16" height="16" viewBox="0 0 16 16"><path d="M1 0.5h14" stroke="#1c3660" stroke-opacity=".85"/><path d="M4 2.5h11" stroke="#1c3660" stroke-opacity=".85"/><path d="M1 4.5h14" stroke="#1c3660" stroke-opacity=".85"/><path d="M4 6.5h11" stroke="#1c3660" stroke-opacity=".85"/><path d="M1 8.5h14" stroke="#1c3660" stroke-opacity=".85"/><path d="M4 10.5h11" stroke="#1c3660" stroke-opacity=".85"/><path d="M1 12.5h14" stroke="#1c3660" stroke-opacity=".85"/><path d="M4 14.5h11" stroke="#1c3660" stroke-opacity=".85"/></svg></div>
<div class="btn r2" style="left:414px"><svg width="16" height="16" viewBox="0 0 16 16"><path d="M1 0.5h14" stroke="#1c3660" stroke-opacity=".85"/><path d="M1 2.5h14" stroke="#1c3660" stroke-opacity=".85"/><path d="M1 4.5h14" stroke="#1c3660" stroke-opacity=".85"/><path d="M1 6.5h14" stroke="#1c3660" stroke-opacity=".85"/><path d="M1 8.5h14" stroke="#1c3660" stroke-opacity=".85"/><path d="M1 10.5h14" stroke="#1c3660" stroke-opacity=".85"/><path d="M1 12.5h14" stroke="#1c3660" stroke-opacity=".85"/><path d="M1 14.5h14" stroke="#1c3660" stroke-opacity=".85"/></svg></div>
<div class="sep" style="left:440px;top:77px"></div>
<div class="btn r2" style="left:446px"><svg width="16" height="16" viewBox="0 0 16 16"><rect x="1" y="2" width="2.5" height="2.5" fill="#2060c8"/><rect x="1" y="7" width="2.5" height="2.5" fill="#2060c8"/><rect x="1" y="12" width="2.5" height="2.5" fill="#2060c8"/><path d="M5 3.5h10M5 8.5h10M5 13.5h10" stroke="#1c3660" stroke-width="1.1"/></svg></div>
<div class="btn r2" style="left:470px"><svg width="16" height="16" viewBox="0 0 16 16"><text x="0.5" y="6" font-size="6.5" font-family="Liberation Sans" font-weight="bold" fill="#2060c8">1</text><text x="0.5" y="11" font-size="6.5" font-family="Liberation Sans" font-weight="bold" fill="#2060c8">2</text><text x="0.5" y="16" font-size="6.5" font-family="Liberation Sans" font-weight="bold" fill="#2060c8">3</text><path d="M5 3.5h10M5 8.5h10M5 13.5h10" stroke="#1c3660" stroke-width="1.1"/></svg></div>
<div class="sep" style="left:496px;top:77px"></div>
<div class="btn r2" style="left:502px"><svg width="16" height="16" viewBox="0 0 16 16"><path d="M0.5 1.5h15M0.5 12.5h15M0.5 14.5h10" stroke="#2a3a60" stroke-width="1"/><path d="M7.5 3.8h8M7.5 7h8M7.5 10h8" stroke="#1a2a50" stroke-width="1.8"/><path d="M0.5 6.5l3.5-3.5v2h2.5v3h-2.5v2z" fill="#3a9a20"/></svg></div>
<div class="btn r2" style="left:526px"><svg width="16" height="16" viewBox="0 0 16 16"><path d="M0.5 1.5h15M0.5 12.5h15M0.5 14.5h10" stroke="#2a3a60" stroke-width="1"/><path d="M7.5 3.8h8M7.5 7h8M7.5 10h8" stroke="#1a2a50" stroke-width="1.8"/><path d="M6.5 6.5l-3.5-3.5v2h-2.5v3h2.5v2z" fill="#3a9a20"/></svg></div>
<div class="sep" style="left:552px;top:77px"></div>
<div class="btn r2" style="left:558px"><svg width="16" height="16" viewBox="0 0 16 16"><path d="M6.5 1.5h7M1.5 3.5h12M1.5 5.5h12M1.5 7.5h12M1.5 9.5h6" stroke="#1c3660"/><rect x="1" y="11" width="14" height="4" fill="#e04a10"/><path d="M1 14.5h14" stroke="#a83008"/></svg></div>

<!-- font bar -->
<div class="combo" style="left:22px;top:100px;width:143px">Arial<div class="dd"></div></div>
<div class="combo" style="left:167px;top:100px;width:60px">10<div class="dd"></div></div>
<div class="combo" style="left:289px;top:99px;width:90px">pixels<div class="dd"></div></div>

<!-- ruler -->
<div class="a" style="left:7px;top:124px;width:727px;height:26px;background:#dedede"></div>
<div class="a" style="left:9px;top:127px;width:697px;height:13px;background:#fff"></div>
<div class="a" style="left:9px;top:127px;width:10px;height:13px;background:#d2d2d2"></div><svg class="a" style="left:25px;top:127px" width="4" height="13"><rect width="4" height="13" fill="#c8c8c8"/><rect x="1" y="1" width="1" height="1" fill="#fff"/><rect x="1" y="3" width="1" height="1" fill="#fff"/><rect x="1" y="5" width="1" height="1" fill="#fff"/><rect x="1" y="7" width="1" height="1" fill="#fff"/><rect x="1" y="9" width="1" height="1" fill="#fff"/><rect x="1" y="11" width="1" height="1" fill="#fff"/><rect x="3" y="1" width="1" height="1" fill="#fff"/><rect x="3" y="3" width="1" height="1" fill="#fff"/><rect x="3" y="5" width="1" height="1" fill="#fff"/><rect x="3" y="7" width="1" height="1" fill="#fff"/><rect x="3" y="9" width="1" height="1" fill="#fff"/><rect x="3" y="11" width="1" height="1" fill="#fff"/></svg>
<div class="a" style="left:706px;top:127px;width:10px;height:13px;background:#d2d2d2"></div>
<div class="rn" style="left:17px">0</div>
<div class="dot" style="left:39px"></div>
<div class="dot" style="left:49px"></div>
<div class="dot" style="left:59px"></div>
<div class="dot" style="left:69px;top:132px;height:4px"></div>
<div class="dot" style="left:79px"></div>
<div class="dot" style="left:89px"></div>
<div class="dot" style="left:99px"></div>
<div class="dot" style="left:109px"></div>
<div class="rn" style="left:70px;width:100px;text-align:center">100</div>
<div class="dot" style="left:129px"></div>
<div class="dot" style="left:139px"></div>
<div class="dot" style="left:149px"></div>
<div class="dot" style="left:159px"></div>
<div class="dot" style="left:169px;top:132px;height:4px"></div>
<div class="dot" style="left:179px"></div>
<div class="dot" style="left:189px"></div>
<div class="dot" style="left:199px"></div>
<div class="dot" style="left:209px"></div>
<div class="rn" style="left:170px;width:100px;text-align:center">200</div>
<div class="dot" style="left:229px"></div>
<div class="dot" style="left:239px"></div>
<div class="dot" style="left:249px"></div>
<div class="dot" style="left:259px"></div>
<div class="dot" style="left:269px;top:132px;height:4px"></div>
<div class="dot" style="left:279px"></div>
<div class="dot" style="left:289px"></div>
<div class="dot" style="left:299px"></div>
<div class="dot" style="left:309px"></div>
<div class="rn" style="left:270px;width:100px;text-align:center">300</div>
<div class="dot" style="left:329px"></div>
<div class="dot" style="left:339px"></div>
<div class="dot" style="left:349px"></div>
<div class="dot" style="left:359px"></div>
<div class="dot" style="left:369px;top:132px;height:4px"></div>
<div class="dot" style="left:379px"></div>
<div class="dot" style="left:389px"></div>
<div class="dot" style="left:399px"></div>
<div class="dot" style="left:409px"></div>
<div class="rn" style="left:370px;width:100px;text-align:center">400</div>
<div class="dot" style="left:429px"></div>
<div class="dot" style="left:439px"></div>
<div class="dot" style="left:449px"></div>
<div class="dot" style="left:459px"></div>
<div class="dot" style="left:469px;top:132px;height:4px"></div>
<div class="dot" style="left:479px"></div>
<div class="dot" style="left:489px"></div>
<div class="dot" style="left:499px"></div>
<div class="dot" style="left:509px"></div>
<div class="rn" style="left:470px;width:100px;text-align:center">500</div>
<div class="dot" style="left:529px"></div>
<div class="dot" style="left:539px"></div>
<div class="dot" style="left:549px"></div>
<div class="dot" style="left:559px"></div>
<div class="dot" style="left:569px;top:132px;height:4px"></div>
<div class="dot" style="left:579px"></div>
<div class="dot" style="left:589px"></div>
<div class="dot" style="left:599px"></div>
<div class="dot" style="left:609px"></div>
<div class="rn" style="left:570px;width:100px;text-align:center">600</div>
<div class="dot" style="left:629px"></div>
<div class="dot" style="left:639px"></div>
<div class="dot" style="left:649px"></div>
<div class="dot" style="left:659px"></div>
<div class="dot" style="left:669px;top:132px;height:4px"></div>
<div class="dot" style="left:679px"></div>
<div class="dot" style="left:689px"></div>
<div class="dot" style="left:699px"></div>
<div class="rn" style="left:669px;width:100px;text-align:center">·700·</div>
<div class="mk" style="left:151px"></div>
<div class="mk" style="left:196px"></div>
<div class="mk" style="left:241px"></div>
<div class="mk" style="left:286px"></div>
<div class="mk" style="left:331px"></div>
<div class="mk" style="left:376px"></div>
<div class="mk" style="left:421px"></div>
<div class="mk" style="left:466px"></div>
<div class="mk" style="left:511px"></div>
<div class="mk" style="left:556px"></div>
<div class="mk" style="left:601px"></div>
<div class="mk" style="left:646px"></div>
<svg class="a" style="left:691px;top:127px" width="9" height="13"><rect width="9" height="13" fill="#c8c8c8"/><rect x="2" y="1" width="1" height="1" fill="#fff"/><rect x="2" y="3" width="1" height="1" fill="#fff"/><rect x="2" y="5" width="1" height="1" fill="#fff"/><rect x="2" y="7" width="1" height="1" fill="#fff"/><rect x="2" y="9" width="1" height="1" fill="#fff"/><rect x="2" y="11" width="1" height="1" fill="#fff"/><rect x="4" y="1" width="1" height="1" fill="#fff"/><rect x="4" y="3" width="1" height="1" fill="#fff"/><rect x="4" y="5" width="1" height="1" fill="#fff"/><rect x="4" y="7" width="1" height="1" fill="#fff"/><rect x="4" y="9" width="1" height="1" fill="#fff"/><rect x="4" y="11" width="1" height="1" fill="#fff"/><rect x="6" y="1" width="1" height="1" fill="#fff"/><rect x="6" y="3" width="1" height="1" fill="#fff"/><rect x="6" y="5" width="1" height="1" fill="#fff"/><rect x="6" y="7" width="1" height="1" fill="#fff"/><rect x="6" y="9" width="1" height="1" fill="#fff"/><rect x="6" y="11" width="1" height="1" fill="#fff"/></svg>
<svg class="a" style="left:28px;top:125px" width="10" height="23"><path d="M0.5 0.5H8.5V2.5L4.5 9L8.5 15.5V22.5H0.5V15.5L4.5 9L0.5 2.5Z" fill="#e2e2e2" stroke="#8e8e8e"/><path d="M0.5 16.5H8.5" stroke="#8e8e8e"/><path d="M1.5 8V2M1.5 1.5H7.5M1.5 21V17.5H7.5M4.5 9.5L1.5 14" fill="none" stroke="#7cc8f4"/></svg>
<svg class="a" style="left:148px;top:134px" width="10" height="9"><path d="M4.5 0.5L8.5 4.5V7.5H0.5V4.5Z" fill="#e2e2e2" stroke="#8e8e8e"/><path d="M1.5 5.5L4.5 1.5" fill="none" stroke="#7cc8f4"/></svg>
<div class="a" style="left:80px;top:141px;width:1px;height:2px;background:#000"></div>
<div class="a" style="left:128px;top:141px;width:1px;height:2px;background:#000"></div>

<!-- document -->
<div class="a" style="left:9px;top:150px;width:706px;height:471px;background:#000"></div>

<!-- TABLE 1 -->
<div class="a" style="left:25px;top:160px;width:674px;height:149px;background:#ffcc99"></div>
<div class="a" style="left:29px;top:164px;width:126px;height:112px;background:#333"></div>
<div class="a" style="left:32px;top:167px;width:120px;height:16px;background:#ffcc99;font-size:13px;font-weight:bold;font-style:italic;line-height:17px;color:#000;white-space:nowrap">Vertical test sample</div>
<div class="a sl" style="left:29px;top:277px;width:126px;height:28px;background:#333;color:#ffff99;font-size:18.5px;line-height:28px;padding-left:4px"><span>Sales</span></div>
<div class="mcell" style="left:156px"><div class="mlab">January</div></div>
<div class="scell" style="left:156px"><span>10</span></div>
<div class="mcell" style="left:201px"><div class="mlab">February</div></div>
<div class="scell" style="left:201px"><span>18</span></div>
<div class="mcell" style="left:246px"><div class="mlab">March</div></div>
<div class="scell" style="left:246px"><span>5</span></div>
<div class="mcell" style="left:291px"><div class="mlab">April</div></div>
<div class="scell" style="left:291px"><span>22</span></div>
<div class="mcell" style="left:336px"><div class="mlab">May</div></div>
<div class="scell" style="left:336px"><span>10</span></div>
<div class="mcell" style="left:381px"><div class="mlab">June</div></div>
<div class="scell" style="left:381px"><span>12</span></div>
<div class="mcell" style="left:426px"><div class="mlab">July</div></div>
<div class="scell" style="left:426px"><span>15</span></div>
<div class="mcell" style="left:471px"><div class="mlab">August</div></div>
<div class="scell" style="left:471px"><span>17</span></div>
<div class="mcell" style="left:516px"><div class="mlab">September</div></div>
<div class="scell" style="left:516px"><span>6</span></div>
<div class="mcell" style="left:561px"><div class="mlab">October</div></div>
<div class="scell" style="left:561px"><span>44</span></div>
<div class="mcell" style="left:606px"><div class="mlab">November</div></div>
<div class="scell" style="left:606px"><span>80</span></div>
<div class="mcell" style="left:651px"><div class="mlab">December</div></div>
<div class="scell" style="left:651px"><span>14</span></div>

<!-- TABLE 2 -->
<div class="a" style="left:159px;top:339px;width:405px;height:262px;background:#fff"></div>
<div class="a" style="left:161px;top:341px;width:185px;height:26px;background:#800080;color:#fff;font-size:13.4px;font-weight:bold;line-height:26px;text-align:center">Text (no rotation)</div>
<div class="a" style="left:348px;top:341px;width:214px;height:26px;background:#800080;color:#fff;font-size:13.2px;font-weight:bold;line-height:26px;text-align:center">Graphics (rotated by 270°)</div>
<div class="a" style="left:161px;top:369px;width:185px;height:203px;background:#99ccff"></div>
<div class="a" style="left:348px;top:369px;width:214px;height:203px;background:#99cc00"></div>
<div class="a" style="left:161px;top:574px;width:401px;height:25px;background:#800080;color:#fff;font-size:13px;font-weight:bold;line-height:25px;text-align:center;transform:rotate(180deg)">Rotated emoticons</div>

<!-- emoticon text table -->
<div class="a" style="left:227px;top:390px;width:52px;height:117px;border:1px solid #000;background:#99ccff"></div>
<div class="a" style="left:228px;top:419px;width:50px;height:1px;background:#000"></div>
<div class="a" style="left:228px;top:448px;width:50px;height:1px;background:#000"></div>
<div class="a" style="left:228px;top:477px;width:50px;height:1px;background:#000"></div>
<div class="emo" style="top:391px">:-(</div>
<div class="emo" style="top:420px">;-)</div>
<div class="emo" style="top:449px">:-)</div>
<div class="emo" style="top:478px">:-D</div>
<div class="a" style="left:161px;top:507px;width:185px;font-size:13px;font-style:italic;line-height:16px;text-align:center;color:#000">Table, 4 rows x 1 column</div>

<!-- graphic table -->
<div class="a" style="left:431px;top:382px;width:34px;height:179px;border:1px solid #eef0d0"></div>
<div class="ic" style="top:384px"></div>
<div class="ic" style="top:428px"></div>
<div class="ic" style="top:472px"></div>
<div class="ic" style="top:516px"></div>
<div class="a" style="left:439px;top:397px"><svg width="17" height="17" viewBox="0 0 17 17"><circle cx="8.5" cy="8.5" r="7.2" fill="#98b0f4" stroke="#3a3a50" stroke-width="1.1"/><rect x="6" y="5.5" width="2" height="2" fill="#101010"/><rect x="6" y="10" width="2" height="2" fill="#101010"/><path d="M5 4.5l-2 2M5 12.5l-2-2" stroke="#101010"/><path d="M12.5 5q-2.2 3.5 0 7" fill="none" stroke="#101010" stroke-width="1.1"/></svg></div>
<div class="a" style="left:439px;top:441px"><svg width="17" height="17" viewBox="0 0 17 17"><circle cx="8.5" cy="8.5" r="7.2" fill="#f8f000" stroke="#3a3a50" stroke-width="1.1"/><rect x="5" y="5.5" width="2" height="2" fill="#101010"/><path d="M5 10v2.5" stroke="#101010" stroke-width="1.2"/><path d="M10.5 4.5q2.5 4 0 8" fill="none" stroke="#101010" stroke-width="1.1"/></svg></div>
<div class="a" style="left:439px;top:485px"><svg width="17" height="17" viewBox="0 0 17 17"><circle cx="8.5" cy="8.5" r="7.2" fill="#f8f000" stroke="#3a3a50" stroke-width="1.1"/><rect x="5" y="5.5" width="2" height="2" fill="#101010"/><rect x="5" y="10" width="2" height="2" fill="#101010"/><path d="M10.5 4.5q2.5 4 0 8" fill="none" stroke="#101010" stroke-width="1.1"/></svg></div>
<div class="a" style="left:439px;top:529px"><svg width="17" height="17" viewBox="0 0 17 17"><circle cx="8.5" cy="8.5" r="7.2" fill="#50e8e0" stroke="#3a3a50" stroke-width="1.1"/><path d="M7.5 3.5v10h4q2.5-5 0-10z" fill="#fff" stroke="#101010"/><path d="M7.5 6.5h5.5M7.5 10.5h5.5M10 3.5v10" stroke="#101010" stroke-width=".9"/><path d="M3 6l2 2.5-2 2.5" fill="none" stroke="#101010"/></svg></div>
<div class="a" style="left:464px;top:539px;transform-origin:0 0;transform:rotate(-90deg);font-size:13.3px;line-height:13px;white-space:nowrap;color:#000">Table, 1 row x 4 colums</div>

<!-- scrollbar -->
<div class="a" style="left:715px;top:150px;width:17px;height:471px;background:linear-gradient(90deg,#979797,#a9a9a9 40%,#ababab)"></div>
<div class="a" style="left:732px;top:124px;width:2px;height:497px;background:#e4e4e4"></div>
<div class="a" style="left:716px;top:151px;width:15px;height:15px;border-radius:3px;border:1px solid #b4b4b4;background:linear-gradient(#e2e2e2,#d2d2d2)"></div>
<div class="a" style="left:719.5px;top:157px;border-left:4px solid transparent;border-right:4px solid transparent;border-bottom:4px solid #707070;width:0;height:0"></div>
<div class="a" style="left:716px;top:605px;width:15px;height:15px;border-radius:3px;border:1px solid #b4b4b4;background:linear-gradient(#e2e2e2,#d2d2d2)"></div>
<div class="a" style="left:719.5px;top:611px;border-left:4px solid transparent;border-right:4px solid transparent;border-top:4px solid #707070;width:0;height:0"></div>

<!-- status bar -->
<div class="a" style="left:7px;top:621px;width:727px;height:21px;background:linear-gradient(#e6e6e6 0,#e6e6e6 2px,#d2d2d2 2px,#d2d2d2 3px,#dddddd 3px,#cecece 100%)"></div>
<div class="a" style="left:413px;top:637px;width:10px;height:1px;background:#a0a0a0"></div>
<div class="a" style="left:618px;top:627px;width:50px;height:13px;border:1px solid #a8a8a8;border-radius:6px;background:linear-gradient(#ffffff,#ececec);font-size:7.5px;font-weight:bold;text-align:center;line-height:11px">Style</div>
<div class="a" style="left:671px;top:627px;width:50px;height:13px;border:1px solid #a8a8a8;border-radius:6px;background:linear-gradient(#ffffff,#ececec);font-size:7.5px;font-weight:bold;text-align:center;line-height:11px">Language</div>
<svg class="a" style="left:721px;top:626px" width="12" height="13"><path d="M11 2L1 12M11 6L5 12M11 10L9 12" stroke="#9a9a9a" stroke-width="1"/></svg>

</body></html>
